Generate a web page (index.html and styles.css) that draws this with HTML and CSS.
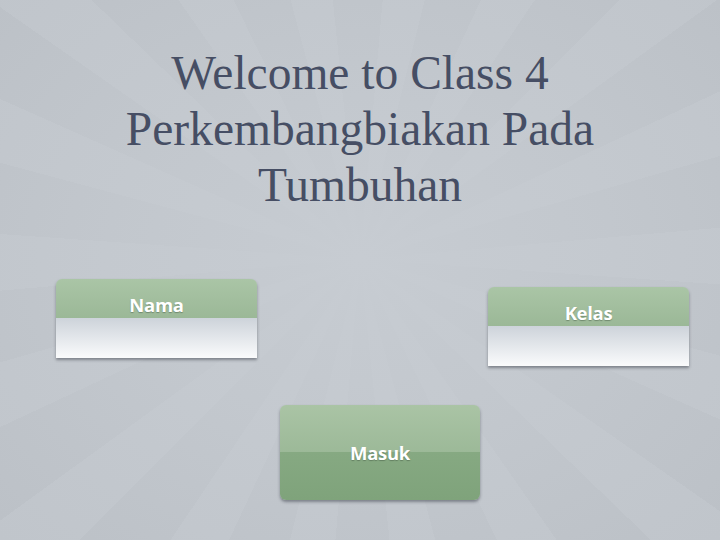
FILE: index.html
```html
<!DOCTYPE html>
<html lang="en">
<head>
    <meta charset="UTF-8">
    <meta name="viewport" content="width=device-width, initial-scale=1.0">
    <title>Class 4</title>
    <link rel="stylesheet" href="styles.css">
</head>
<body>
    <div class="stage">
        <h1 class="judul">Welcome to Class 4<br>Perkembangbiakan Pada<br>Tumbuhan</h1>
        <div class="baris">
            <div class="kotak">
                <label class="kepala" for="nama">Nama</label>
                <input class="isian" type="text" id="nama">
            </div>
            <div class="kotak kotak-kelas">
                <label class="kepala" for="kelas">Kelas</label>
                <input class="isian" type="text" id="kelas">
            </div>
        </div>
        <button class="masuk">Masuk</button>
    </div>
</body>
</html>
```

FILE: styles.css
```css
body {
    margin: 0;
    background: #c2c7cd;
}
.stage {
    width: 720px;
    height: 540px;
    overflow: hidden;
    display: flex;
    flex-direction: column;
    background:
        radial-gradient(ellipse at 50% 48%, rgba(199, 204, 210, 1) 0%, rgba(197, 202, 208, 0.8) 45%, rgba(190, 195, 201, 0.5) 100%),
        repeating-conic-gradient(from 5deg at 50% 48%, #c2c7cd 0deg 9deg, #b9bec4 9deg 20deg);
}
.judul {
    margin: 0;
    padding-top: 45px;
    font-family: "Liberation Serif", "Times New Roman", serif;
    font-weight: normal;
    font-size: 47.5px;
    line-height: 56px;
    text-align: center;
    color: #464e64;
}
.baris {
    display: flex;
    justify-content: space-between;
    align-items: flex-start;
    padding: 0 31px 0 56px;
    margin-top: 66px;
}
.kotak {
    width: 201px;
    display: flex;
    flex-direction: column;
    border-radius: 6px 6px 0 0;
    box-shadow: 0 2px 3px rgba(40, 45, 55, 0.45);
}
.kotak-kelas {
    margin-top: 8px;
}
.kepala {
    height: 39px;
    display: flex;
    align-items: center;
    justify-content: center;
    padding-top: 11px;
    box-sizing: border-box;
    border-radius: 6px 6px 0 0;
    background: linear-gradient(#aac5a6, #9bb897);
    font-family: "Open Sans", sans-serif;
    font-weight: bold;
    font-size: 18.5px;
    letter-spacing: -0.3px;
    color: #fff;
    text-shadow: 0 1px 1px rgba(60, 80, 60, 0.45);
}
.isian {
    height: 40px;
    border: none;
    margin: 0;
    padding: 0;
    display: block;
    width: 100%;
    background: linear-gradient(#cdd3da, #fafbfc);
    outline: none;
}
.masuk {
    margin: 39px 0 0 280px;
    width: 200px;
    height: 95px;
    border: none;
    border-radius: 6px;
    background: linear-gradient(#aac4a5 0%, #9cb998 50%, #86a982 50%, #7fa37b 100%);
    box-shadow: 0 2px 3px rgba(40, 45, 55, 0.45);
    font-family: "Open Sans", sans-serif;
    font-weight: bold;
    font-size: 18.5px;
    letter-spacing: -0.3px;
    color: #fff;
    text-shadow: 0 1px 1px rgba(60, 80, 60, 0.45);
}
```
